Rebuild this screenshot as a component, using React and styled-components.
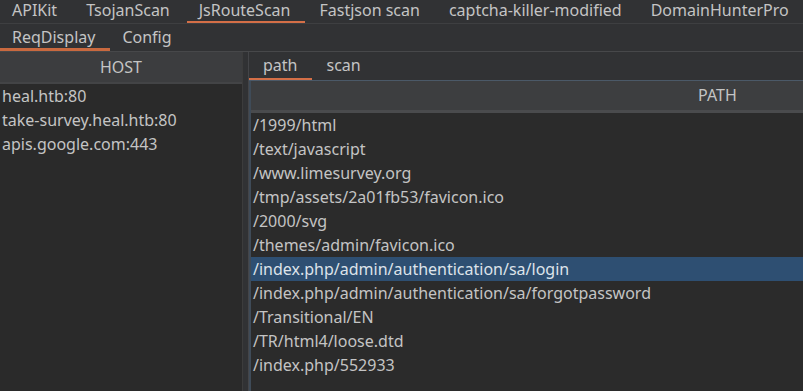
import styled, { createGlobalStyle } from "styled-components";

const topTabs = ["APIKit", "TsojanScan", "JsRouteScan", "Fastjson scan", "captcha-killer-modified", "DomainHunterPro"];
const hosts = ["heal.htb:80", "take-survey.heal.htb:80", "apis.google.com:443"];
const paths = [
	"/1999/html",
	"/text/javascript",
	"/www.limesurvey.org",
	"/tmp/assets/2a01fb53/favicon.ico",
	"/2000/svg",
	"/themes/admin/favicon.ico",
	"/index.php/admin/authentication/sa/login",
	"/index.php/admin/authentication/sa/forgotpassword",
	"/Transitional/EN",
	"/TR/html4/loose.dtd",
	"/index.php/552933",
];

const Global = createGlobalStyle`
	body {
		margin: 0;
		background: #2b2b2b;
		font-family: "Noto Sans", "Open Sans", sans-serif;
		overflow: hidden;
	}
`;

const App = () => {
	return (
		<Page>
			<Global />
			<TabBar>
				{topTabs.map((t) => (
					<Tab key={t} $active={t === "JsRouteScan"}>{t}</Tab>
				))}
			</TabBar>
			<SubBar>
				<SubTab $active>ReqDisplay</SubTab>
				<SubTab>Config</SubTab>
			</SubBar>
			<Split>
				<LeftPanel>
					<HostHeader>HOST</HostHeader>
					{hosts.map((h) => (
						<HostRow key={h}>{h}</HostRow>
					))}
				</LeftPanel>
				<Divider />
				<RightPanel>
					<InnerTabs>
						<InnerTab $active>path</InnerTab>
						<InnerTab>scan</InnerTab>
					</InnerTabs>
					<Table>
						<TableHead>PATH</TableHead>
						{paths.map((p) => (
							<PathRow key={p} $selected={p.endsWith("/sa/login")}>{p}</PathRow>
						))}
					</Table>
				</RightPanel>
			</Split>
		</Page>
	);
};

export default App;

const Page = styled.div`
	width: 803px;
	height: 391px;
	display: flex;
	flex-direction: column;
	background: #2b2b2b;
	color: #c4c4c4;
	font-size: 16px;
`;

const TabBar = styled.div`
	display: flex;
	height: 23px;
	background: #313234;
	border-bottom: 1px solid #3e3f41;
	flex-shrink: 0;
`;

const Tab = styled.div`
	padding: 0 15px 0 12px;
	margin-right: 2px;
	line-height: 20px;
	white-space: nowrap;
	box-shadow: ${(p) => (p.$active ? "inset 0 -2px 0 #d46f47" : "none")};
`;

const SubBar = styled.div`
	display: flex;
	height: 27px;
	background: #313234;
	border-bottom: 1px solid #47484a;
	flex-shrink: 0;
`;

const SubTab = styled.div`
	padding: 0 15px 0 12px;
	line-height: 26px;
	box-shadow: ${(p) => (p.$active ? "inset 0 -3px 0 #c9693f" : "none")};
`;

const Split = styled.div`
	display: flex;
	flex: 1;
	min-height: 0;
`;

const LeftPanel = styled.div`
	width: 242px;
	display: flex;
	flex-direction: column;
	background: #2a2a2a;
	border-right: 1px solid #3c3c3c;
`;

const HostHeader = styled.div`
	height: 30px;
	line-height: 30px;
	text-align: center;
	background: #3c3d3f;
	border-bottom: 2px solid #434446;
`;

const HostRow = styled.div`
	height: 24px;
	line-height: 24px;
	padding-left: 2px;
	white-space: nowrap;
`;

const Divider = styled.div`
	width: 5px;
	background: #313234;
	border-right: 1px solid #444548;
`;

const RightPanel = styled.div`
	flex: 1;
	display: flex;
	flex-direction: column;
	min-width: 0;
	background: #2b2b2b;
`;

const InnerTabs = styled.div`
	display: flex;
	height: 28px;
	background: #313234;
	border-bottom: 1px solid #4b5968;
`;

const InnerTab = styled.div`
	padding: 0 15px 0 14px;
	line-height: 27px;
	box-shadow: ${(p) => (p.$active ? "inset 0 -2px 0 #d46f47" : "none")};
`;

const Table = styled.div`
	flex: 1;
	border-left: 2px solid #3f4b58;
	overflow: hidden;
`;

const TableHead = styled.div`
	height: 29px;
	line-height: 29px;
	padding-left: 447px;
	background: #3d3e40;
	border-bottom: 3px solid #4a4b4d;
	white-space: nowrap;
`;

const PathRow = styled.div`
	height: 24px;
	line-height: 24px;
	padding-left: 2px;
	white-space: nowrap;
	background: ${(p) => (p.$selected ? "#2e4f72" : "transparent")};
	color: ${(p) => (p.$selected ? "#dde3ea" : "#c4c4c4")};
`;
